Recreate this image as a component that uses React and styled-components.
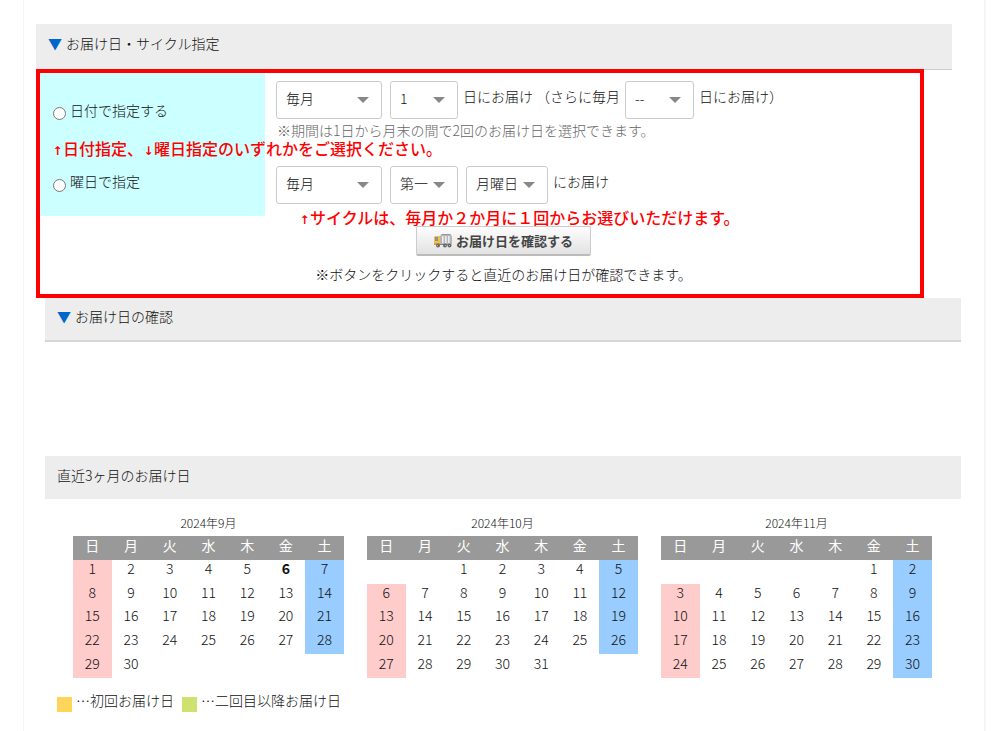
import React, { useState } from 'react'
import styled, { createGlobalStyle } from 'styled-components'

const GlobalStyle = createGlobalStyle`
  * {
    box-sizing: border-box;
  }

  body {
    margin: 0;
    background-color: #fff;
    color: #111;
    font-family: 'Noto Sans CJK JP', sans-serif;
    font-size: 14px;
    font-weight: 300;
    line-height: 20px;
  }
`

const Page = styled.main`
  min-height: 100vh;
  margin: 0 14px 0 23px;
  padding: 24px 23px 16px 11px;
  border: solid #f5f5f5;
  border-width: 0 2px 0 1px;
`

const Heading = styled.h2`
  margin: 0;
  padding: 9px 12px 14px;
  background-color: #ededed;
  font-size: 14px;
  font-weight: 300;
  line-height: 20px;

  .mark {
    margin-right: 1px;
    color: #0066cc;
  }
`

const CycleHeading = styled(Heading)`
  margin: 0 9px -1px 1px;
  padding-bottom: 16px;
  border-bottom: 1px solid #ccc;
`

const ConfirmHeading = styled(Heading)`
  padding-top: 8px;
  border-bottom: 2px solid #d6d6d6;
`

const CycleBox = styled.section`
  position: relative;
  margin: 0 37px 0 1px;
  border: 4px solid #f00;
`

const Row = styled.div`
  display: grid;
  grid-template-columns: 225px 1fr;
  min-height: ${({ $height }) => $height}px;
`

const RadioCell = styled.label`
  display: flex;
  align-items: center;
  gap: 4px;
  padding-left: 13px;
  background-color: #cff;

  input {
    width: 13px;
    height: 13px;
    margin: 0;
  }
`

const Text = styled.span`
  padding-bottom: 8px;
  white-space: pre;
`

const Fields = styled.div`
  padding: ${({ $top }) => $top}px 0 0 11px;
`

const Line = styled.div`
  display: flex;
  align-items: center;
  gap: 5px;
`

const SelectBox = styled.div`
  position: relative;
  width: ${({ $width }) => $width}px;
  margin-right: ${({ $after }) => $after || 0}px;

  select {
    display: block;
    width: 100%;
    height: 38px;
    padding: 0 0 5px 9px;
    border: 1px solid #ccc;
    border-radius: 3px;
    background-color: #fff;
    color: #111;
    font: inherit;
    appearance: none;
  }

  svg {
    position: absolute;
    top: 16px;
    right: 13px;
    pointer-events: none;
  }
`

const Note = styled.p`
  margin: 0;
  padding-left: 1px;
  color: #666;
  line-height: 22px;
`

const Annotation = styled.p`
  position: absolute;
  top: ${({ $top }) => $top}px;
  left: ${({ $left }) => $left}px;
  margin: 0;
  color: #f00;
  font-size: 16px;
  font-weight: 500;
  line-height: 24px;
  white-space: nowrap;

  .arrow {
    display: inline-block;
    width: 11px;
    font-family: 'DejaVu Sans', sans-serif;
    font-size: 12px;
    font-weight: 700;
    text-align: center;
  }
`

const Actions = styled.div`
  display: flex;
  flex-direction: column;
  align-items: center;
  gap: 8px;
  padding: 10px 0 10px 47px;

  p {
    margin: 0;
  }
`

const CheckButton = styled.button`
  display: flex;
  justify-content: center;
  align-items: center;
  gap: 4px;
  width: 175px;
  height: 30px;
  padding: 0 0 1px;
  border: 1px solid #ccc;
  border-bottom: 2px solid #bbb;
  border-radius: 2px;
  background: linear-gradient(#fdfdfd, #e2e2e2);
  color: #444;
  font-family: inherit;
  font-size: 13px;
  font-weight: 700;
`

const Lower = styled.section`
  margin-left: 10px;
`

const Result = styled.div`
  height: 114px;
`

const Calendars = styled.div`
  display: flex;
  gap: 23px;
  padding: 14px 29px 0 28px;
`

const Calendar = styled.table`
  flex: 1;
  height: 142px;
  border-collapse: collapse;
  table-layout: fixed;
  text-align: center;

  caption {
    height: 23px;
    font-size: 12px;
  }

  th,
  td {
    padding: 0 0 6px;
    line-height: 17px;
  }

  th {
    height: 24px;
    background-color: #999;
    color: #fff;
    font-weight: 400;
  }
`

const Day = styled.td`
  background-color: ${({ $kind }) =>
    ({ sun: '#fcc', sat: '#9cf' })[$kind] || 'transparent'};
  font-weight: ${({ $today }) => ($today ? 700 : 300)};
`

const Legend = styled.div`
  display: flex;
  align-items: center;
  gap: 4px;
  padding: 12px 12px 0;
`

const Swatch = styled.i`
  width: 15px;
  height: 15px;
  background-color: ${({ $color }) => $color};
`

const LegendText = styled(Text)`
  margin-right: 4px;
`

const WEEK = ['日', '月', '火', '水', '木', '金', '土']

const MONTHS = [
  { title: '2024年9月', start: 0, days: 30, today: 6 },
  { title: '2024年10月', start: 2, days: 31 },
  { title: '2024年11月', start: 5, days: 30 },
]

const toWeeks = ({ start, days }) =>
  Array.from({ length: Math.ceil((start + days) / 7) }, (_, w) =>
    WEEK.map((_, d) => {
      const day = w * 7 + d - start + 1
      return day > 0 && day <= days ? day : null
    })
  )

const dayKind = (day, index) => {
  if (!day) return null
  if (index === 0) return 'sun'
  return index === 6 ? 'sat' : null
}

const Select = ({ label, options, width, after }) => (
  <SelectBox $width={width} $after={after}>
    <select aria-label={label}>
      {options.map(option => (
        <option key={option}>{option}</option>
      ))}
    </select>
    <svg width="12" height="6" viewBox="0 0 12 6">
      <path d="M0 0h12L6 6z" fill="#888" />
    </svg>
  </SelectBox>
)

const Truck = () => (
  <svg width="18" height="15" viewBox="0 0 18 15">
    <path d="M6 3l2-2h8l2 2v8l-1 1H6z" fill="#b4b6b8" />
    <path d="M8 1h8l1 1H7z" fill="#989898" />
    <path d="M8 3h1.6v7H8zM11 3h1.6v7H11zM14 3h1.6v7H14z" fill="#ececec" />
    <path d="M6 11h11v1H6z" fill="#8b8378" />
    <path d="M0 4l1-1h5v9H0z" fill="#f3c04a" />
    <path d="M1 4h3v4H1z" fill="#8593a8" />
    <path d="M0 10h6v2H0z" fill="#dba432" />
    <circle cx="4" cy="12.5" r="2" fill="#666" />
    <circle cx="11" cy="12.5" r="2" fill="#666" />
    <circle cx="15.5" cy="12.5" r="2" fill="#666" />
    <path d="M3 12h1v1H3zM11 12h1v1h-1zM15 12h1v1h-1z" fill="#bbb" />
  </svg>
)

const App = () => {
  const [type, setType] = useState('')

  const onTypeChange = ({ target: { value } }) => {
    setType(value)
  }

  return (
    <>
      <GlobalStyle />
      <Page>
        <CycleHeading>
          <span className="mark">▼</span> お届け日・サイクル指定
        </CycleHeading>
        <CycleBox>
          <Row $height={81}>
            <RadioCell>
              <input
                type="radio"
                name="type"
                value="date"
                checked={type === 'date'}
                onChange={onTypeChange}
              />
              <Text>日付で指定する</Text>
            </RadioCell>
            <Fields $top={8}>
              <Line>
                <Select label="周期" options={['毎月', '2か月']} width={106} after={3} />
                <Select label="お届け日" options={['1', '2', '3']} width={68} />
                <Text>日にお届け （さらに毎月</Text>
                <Select label="2回目のお届け日" options={['--', '1', '2']} width={69} />
                <Text>日にお届け）</Text>
              </Line>
              <Note>※期間は1日から月末の間で2回のお届け日を選択できます。</Note>
            </Fields>
          </Row>
          <Row $height={62}>
            <RadioCell>
              <input
                type="radio"
                name="type"
                value="week"
                checked={type === 'week'}
                onChange={onTypeChange}
              />
              <Text>曜日で指定</Text>
            </RadioCell>
            <Fields $top={12}>
              <Line>
                <Select label="周期" options={['毎月', '2か月']} width={106} after={3} />
                <Select label="週" options={['第一', '第二']} width={68} after={3} />
                <Select label="曜日" options={['月曜日', '火曜日']} width={82} />
                <Text>にお届け</Text>
              </Line>
            </Fields>
          </Row>
          <Actions>
            <CheckButton type="button">
              <Truck />
              お届け日を確認する
            </CheckButton>
            <p>※ボタンをクリックすると直近のお届け日が確認できます。</p>
          </Actions>
          <Annotation $top={63} $left={12}>
            <span className="arrow">↑</span>日付指定、
            <span className="arrow">↓</span>曜日指定のいずれかをご選択ください。
          </Annotation>
          <Annotation $top={132} $left={259}>
            <span className="arrow">↑</span>
            サイクルは、毎月か２か月に１回からお選びいただけます。
          </Annotation>
        </CycleBox>
        <Lower>
          <ConfirmHeading>
            <span className="mark">▼</span> お届け日の確認
          </ConfirmHeading>
          <Result />
          <Heading>直近3ヶ月のお届け日</Heading>
          <Calendars>
            {MONTHS.map(month => (
              <Calendar key={month.title}>
                <caption>{month.title}</caption>
                <thead>
                  <tr>
                    {WEEK.map(name => (
                      <th key={name}>{name}</th>
                    ))}
                  </tr>
                </thead>
                <tbody>
                  {toWeeks(month).map((week, w) => (
                    <tr key={w}>
                      {week.map((day, d) => (
                        <Day
                          key={d}
                          $kind={dayKind(day, d)}
                          $today={day && day === month.today}
                        >
                          {day}
                        </Day>
                      ))}
                    </tr>
                  ))}
                </tbody>
              </Calendar>
            ))}
          </Calendars>
          <Legend>
            <Swatch $color="#ffd45a" />
            <LegendText>…初回お届け日</LegendText>
            <Swatch $color="#cde36d" />
            <LegendText>…二回目以降お届け日</LegendText>
          </Legend>
        </Lower>
      </Page>
    </>
  )
}

export default App
